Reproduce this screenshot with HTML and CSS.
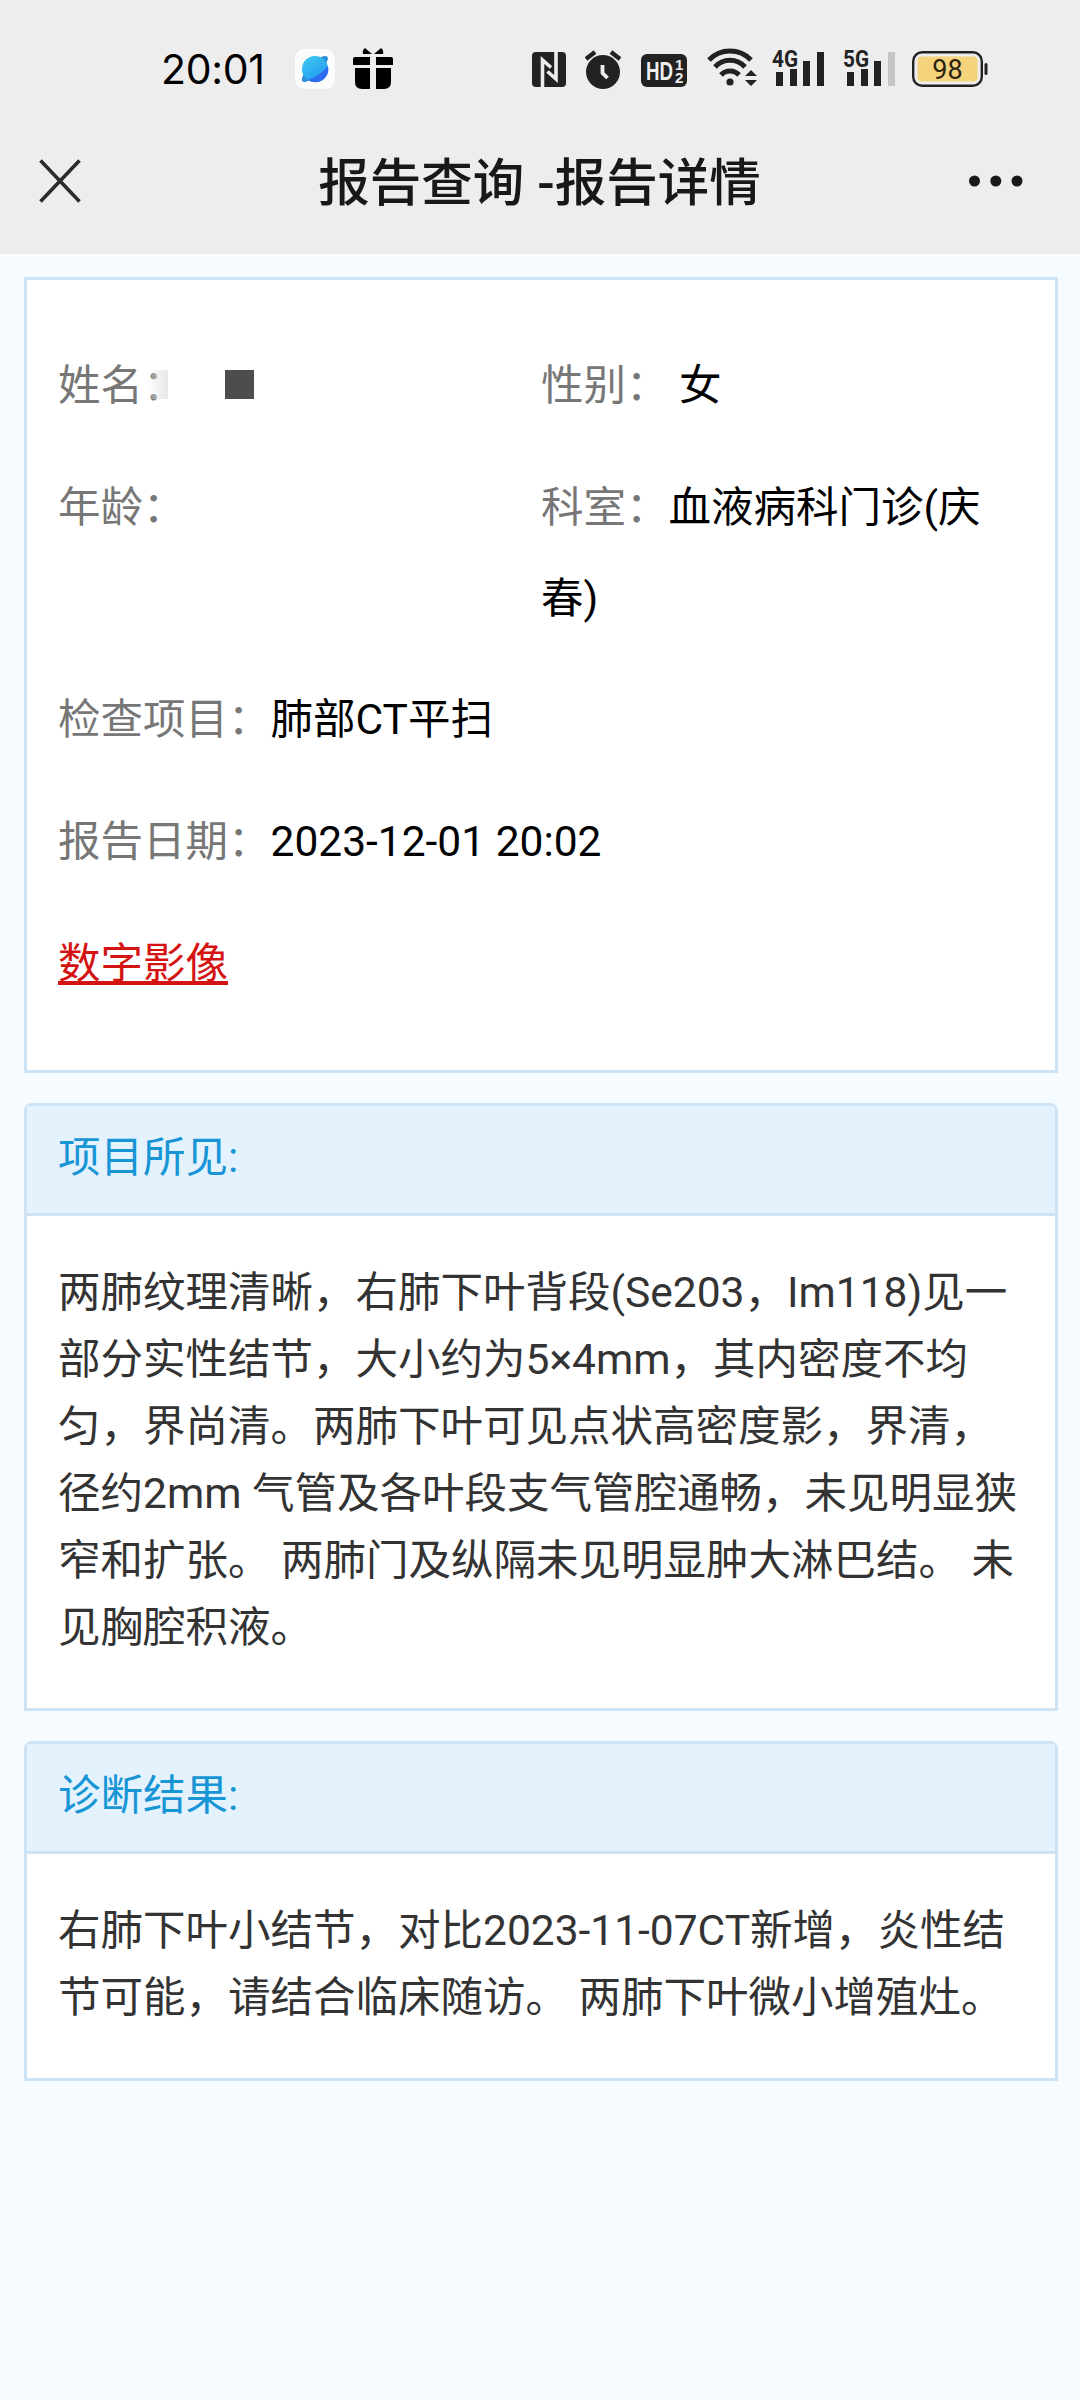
FILE: index.html
```
<!DOCTYPE html>
<html lang="zh-CN">
  <head>
    <meta charset="UTF-8" />
    <meta name="viewport" content="width=device-width, initial-scale=1.0" />
    <title>报告查询 -报告详情</title>
    <link rel="stylesheet" href="styles.css">
  </head>
  <body>
    <header class="top">
      <div class="status-bar">
        <div class="status-left">
          <span class="time">20:01</span>
          <svg class="app-icon" width="40" height="40" viewBox="0 0 40 40">
            <defs>
              <linearGradient id="planet" x1="0" y1="0" x2="0.7" y2="1">
                <stop offset="0" stop-color="#3fcdf2" />
                <stop offset="1" stop-color="#2196ee" />
              </linearGradient>
            </defs>
            <rect width="40" height="40" rx="9" fill="#fafbfb" />
            <path d="M26 8 Q33 5 33 10 L31 15 L13 32 Q6 35 7 29 L9 24Z" fill="#2b8ed6" />
            <circle cx="20" cy="20" r="13" fill="url(#planet)" />
            <path d="M33 17 A13 13 0 0 1 13 31 Q25 27 33 17Z" fill="#2d6bf0" />
          </svg>
          <svg class="gift-icon" width="40" height="41" viewBox="0 0 40 41">
            <path d="M19 6 L12 0 Q9 2 10 6Z M21 6 L28 0 Q31 2 30 6Z" />
            <path d="M2 9H17V17H0V11Q0 9 2 9Z M23 9H38Q40 9 40 11V17H23Z" />
            <path d="M2 20H17V41H9Q2 41 2 34Z M23 20H38V34Q38 41 31 41H23Z" />
          </svg>
        </div>
        <div class="status-right">
          <svg class="nfc" width="34" height="35" viewBox="0 0 34 35">
            <rect width="34" height="35" rx="4" fill="#222" />
            <path d="M10.500 35V8L19 15.500M24 0V27L15.500 19.500" fill="none" stroke="#ededed" stroke-width="3.600" />
          </svg>
          <svg class="alarm" width="36" height="39" viewBox="0 0 36 39">
            <circle cx="18" cy="22" r="17" fill="#222" />
            <path d="M1 9L10 2M35 9L26 2" stroke="#222" stroke-width="4.500" />
            <path d="M17.500 15V23L22.500 28" fill="none" stroke="#ededed" stroke-width="3.800" />
          </svg>
          <svg class="hd" width="46" height="33" viewBox="0 0 46 33">
            <rect width="46" height="33" rx="6" fill="#222" />
            <text x="5" y="26" font-size="25" textLength="27" lengthAdjust="spacingAndGlyphs">HD</text>
            <text x="34" y="16" font-size="15">1</text>
            <text x="34" y="29" font-size="15">2</text>
          </svg>
          <svg class="wifi" width="50" height="39" viewBox="0 0 50 39">
            <g fill="none" stroke="#222" stroke-width="5">
              <path d="M2 12A29 29 0 0 1 44 12" />
              <path d="M8 19A20 20 0 0 1 38 19" />
              <path d="M14 27A12 12 0 0 1 32 27" />
            </g>
            <circle cx="23" cy="34" r="3.600" fill="#222" />
            <path d="M38 28L44 22L50 28ZM38 32H50L44 38Z" fill="#222" />
          </svg>
          <svg class="signal" width="53" height="42" viewBox="0 -4 53 42">
            <text x="0" y="17.500" font-size="24" textLength="26" lengthAdjust="spacingAndGlyphs">4G</text>
            <path d="M4 23H11V37H4ZM18 20H25V37H18ZM31 12H38V37H31ZM45 3H52V37H45Z" />
          </svg>
          <svg class="signal" width="53" height="42" viewBox="0 -4 53 42">
            <text x="0" y="17.500" font-size="24" textLength="26" lengthAdjust="spacingAndGlyphs">5G</text>
            <path d="M4 23H11V37H4ZM18 20H25V37H18ZM31 12H38V37H31Z" />
            <path class="weak" d="M45 3H52V37H45Z" />
          </svg>
          <svg class="battery" width="76" height="36" viewBox="0 0 76 36">
            <rect x="1.200" y="1.200" width="68.600" height="33.600" rx="9" fill="none" stroke="#222" stroke-width="2.400" />
            <rect x="5.500" y="5.500" width="60" height="25" rx="4" fill="#f5d27c" />
            <rect x="72.500" y="12" width="3" height="12" rx="1.500" fill="#222" />
            <text x="35.500" y="27.500" text-anchor="middle" font-size="27">98</text>
          </svg>
        </div>
      </div>
      <div class="nav-bar">
        <svg class="close" width="42" height="44" viewBox="0 0 42 44">
          <path d="M1.500 1.500L40.500 42.500M40.500 1.500L1.500 42.500" stroke="#2b2b2b" stroke-width="3.600" />
        </svg>
        <h1 class="title">报告查询 -报告详情</h1>
        <svg class="more" width="54" height="12" viewBox="0 0 54 12">
          <circle cx="5.500" cy="6" r="5.500" />
          <circle cx="26.800" cy="6" r="5.500" />
          <circle cx="48" cy="6" r="5.500" />
        </svg>
      </div>
    </header>

    <main class="content">
      <section class="info">
        <div class="row">
          <div class="col name"><label>姓名：</label><i class="smudge"></i><i class="mask"></i></div>
          <div class="col"><label>性别：</label> <span>女</span></div>
        </div>
        <div class="row">
          <div class="col"><label>年龄：</label></div>
          <div class="col"><label>科室：</label><span>血液病科门诊(庆<br>春)</span></div>
        </div>
        <div class="row"><label>检查项目：</label><span>肺部CT平扫</span></div>
        <div class="row"><label>报告日期：</label><span>2023-12-01 20:02</span></div>
        <div class="row"><a class="image-link" href="#">数字影像</a></div>
      </section>

      <section class="panel">
        <h2 class="panel-title">项目所见:</h2>
        <p class="panel-body">
          两肺纹理清晰，右肺下叶背段(Se203，Im118)见一<br>部分实性结节，大小约为5×4mm，其内密度不均<br>匀，界尚清。两肺下叶可见点状高密度影，界清，<br>径约2mm 气管及各叶段支气管腔通畅，未见明显狭<br>窄和扩张。 两肺门及纵隔未见明显肿大淋巴结。 未<br>见胸腔积液。
        </p>
      </section>

      <section class="panel">
        <h2 class="panel-title">诊断结果:</h2>
        <p class="panel-body">
          右肺下叶小结节，对比2023-11-07CT新增，炎性结<br>节可能，请结合临床随访。 两肺下叶微小增殖灶。
        </p>
      </section>
    </main>
  </body>
</html>
```
FILE: styles.css
```
* {
  box-sizing: border-box;
}

body {
  margin: 0;
  min-height: 2400px;
  background-color: #f5fbff;
  color: #333;
  font-family: Roboto, "Noto Sans CJK SC", sans-serif;
  font-size: 42.5px;
  font-weight: 400;
}

svg {
  display: block;
  flex-shrink: 0;
}

.top {
  height: 254px;
  background-color: #ededed;
}

.status-bar {
  display: flex;
  justify-content: space-between;
  height: 110px;
  padding: 47px 92px 0 161px;
}

.status-left,
.status-right {
  display: flex;
  align-items: flex-start;
}

.time {
  width: 134px;
  font-family: Inter, sans-serif;
  font-size: 41px;
  line-height: 45px;
  letter-spacing: -0.3px;
  color: #000;
}

.app-icon {
  margin-top: 2px;
}

.gift-icon {
  margin: 1px 0 0 18px;
}

.nfc {
  margin-top: 5px;
}

.alarm {
  margin: 3px 0 0 19px;
}

.hd {
  margin: 7px 0 0 20px;
  fill: #ededed;
  font-family: "Liberation Sans", sans-serif;
  font-weight: 700;
}

.wifi {
  margin: 1px 0 0 20px;
}

.signal {
  margin: -2px 0 0 18px;
  fill: #222;
  font-family: Roboto, sans-serif;
  font-weight: 700;
}

.wifi + .signal {
  margin-left: 15px;
}

.signal .weak {
  fill: #c6c6c6;
}

.battery {
  margin: 4px 0 0 16px;
  fill: #2b2210;
  font-family: Roboto, sans-serif;
}

.nav-bar {
  display: flex;
  align-items: center;
  justify-content: space-between;
  height: 141px;
  padding: 0 57px 0 39px;
}

.title {
  margin: 7px 0 0 29px;
  font-size: 51.5px;
  font-weight: 500;
  line-height: 70px;
  color: #181818;
}

.more {
  fill: #181818;
}

.content {
  padding: 23px 22px 0 24px;
}

.info {
  height: 796px;
  padding: 60px 31px 0;
  border: 3px solid #cde2f2;
  background-color: #fff;
  color: #000;
  line-height: 91px;
}

.row {
  display: flex;
  margin-bottom: 30.7px;
}

.col {
  width: 50%;
  white-space: nowrap;
}

.col span {
  white-space: normal;
}

label {
  color: #777;
}

.name {
  display: flex;
  align-items: center;
}

.smudge {
  width: 22px;
  height: 29px;
  margin: -2px 0 0 -40px;
  background: linear-gradient(to right, #fff0, #e8e8e8);
}

.mask {
  width: 29px;
  height: 29px;
  margin: -2px 0 0 57px;
  background-color: #4d4d4d;
}

.image-link {
  color: #d41313;
  text-decoration-thickness: 4px;
  text-underline-offset: 3px;
}

.panel {
  margin-top: 30px;
  border: 3px solid #cde2f2;
  border-radius: 8px 8px 0 0;
  background-color: #fff;
}

.panel-title {
  height: 110px;
  margin: 0;
  padding-left: 31px;
  border-bottom: 3px solid #cde2f2;
  background-color: #e3f2fd;
  color: #1795d5;
  font-size: 42.5px;
  font-weight: 400;
  line-height: 104px;
}

.panel-body {
  margin: 0;
  padding: 43px 31px 47px;
  line-height: 67px;
  white-space: nowrap;
}
```
